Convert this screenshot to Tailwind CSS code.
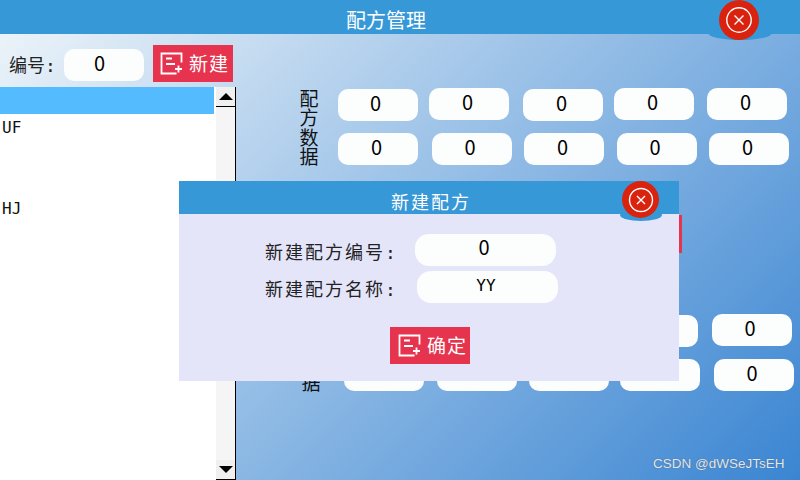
<!DOCTYPE html>
<html lang="zh-CN">
  <head>
    <meta charset="UTF-8" />
    <title>配方管理</title>
    <script src="https://cdn.jsdelivr.net/npm/@tailwindcss/browser@4"></script>
  </head>
  <body class="overflow-hidden">
    <div class="relative w-[800px] h-[480px] overflow-hidden flex flex-col bg-[linear-gradient(135deg,#f0f6fa_0%,#3a85d2_100%)] text-black font-['Noto_Sans_CJK_SC',sans-serif]">
      <!-- title bar -->
      <header class="h-[34px] shrink-0 bg-[#3798d8] text-white text-[20px] leading-[39px] pr-[28px] text-center">配方管理</header>
      <div class="absolute left-[708px] top-[26px] w-[64px] h-[14px] rounded-[50%] bg-[#3798d8]"></div>
      <button class="absolute left-[719px] top-0 w-[40px] h-[40px] rounded-full bg-[#d9230f] flex items-center justify-center">
        <svg width="28" height="28" viewBox="0 0 28 28" fill="none" stroke="#fff" stroke-width="1.4">
          <circle cx="14" cy="14" r="12.2" />
          <path d="M9.500 9.500l9 9M18.500 9.500l-9 9" />
        </svg>
      </button>

      <div class="flex flex-1 min-h-0">
        <!-- recipe list -->
        <aside class="w-[236px] shrink-0 flex flex-col">
          <div class="h-[53px] shrink-0 flex items-start">
            <span class="ml-[9px] mt-[21px] w-[55px] text-[18px] leading-[22px] text-[#222] font-['DejaVu_Sans_Mono','Noto_Sans_CJK_SC',monospace]">编号:</span>
            <div class="mt-[15px] w-[80px] h-[32px] pr-[9px] rounded-[10px] bg-[#fcfdfd] text-[20px] leading-[28px] text-center">0</div>
            <button class="ml-[9px] mt-[11px] w-[80px] h-[37px] bg-[#e6344e] text-white text-[19px] tracking-[1px] flex items-center pl-[7px] gap-[6px]">
              <svg width="23" height="23" viewBox="0 0 23 23" fill="none" stroke="#fff" stroke-width="1.800">
                <path d="M21.500 10.500V1.500H1.500v20h15" />
                <path d="M6 6.500h6M6 12h9M15 17h7M18.500 13.500v7" />
              </svg>
              <span>新建</span>
            </button>
          </div>
          <div class="flex-1 flex bg-white min-h-0">
            <ul class="w-[216px] text-[16px] leading-[27px] pl-[2px] text-[#111] font-['DejaVu_Sans_Mono',monospace]">
              <li class="h-[27px] w-[214px] -ml-[2px] bg-[#55bbff]"></li>
              <li class="h-[27px]">UF</li>
              <li class="h-[27px]"></li>
              <li class="h-[27px]"></li>
              <li class="h-[27px]">HJ</li>
            </ul>
            <div class="w-[20px] bg-[#f5f5f5] border-r border-black flex flex-col justify-between">
              <div class="h-[20px] bg-[#f0f0f0] border-b border-black flex items-center justify-center">
                <div class="w-0 h-0 border-x-[7px] border-x-transparent border-b-[7px] border-b-black"></div>
              </div>
              <div class="h-[20px] bg-[#f0f0f0] border-b border-black flex items-center justify-center">
                <div class="w-0 h-0 border-x-[7px] border-x-transparent border-t-[7px] border-t-black"></div>
              </div>
            </div>
          </div>
        </aside>

        <!-- recipe data -->
        <main class="flex-1 flex flex-col text-[20px] text-center">
          <section class="flex mt-[54px] h-[77px]">
            <div class="ml-[63px] w-[20px] text-[19px] leading-[19.300px] text-[#111]">配方数据</div>
            <div class="ml-[19px] flex flex-col gap-[12px]">
              <div class="flex">
                <div class="mt-[1px] w-[80px] h-[32px] pr-[5px] rounded-[10px] bg-[#fcfdfd] leading-[27px]">0</div>
                <div class="ml-[11px] w-[80px] h-[32px] pr-[3px] rounded-[10px] bg-[#fcfdfd] leading-[27px]">0</div>
                <div class="ml-[14px] mt-[1px] w-[80px] h-[32px] pr-[3px] rounded-[10px] bg-[#fcfdfd] leading-[27px]">0</div>
                <div class="ml-[11px] w-[80px] h-[32px] pr-[3px] rounded-[10px] bg-[#fcfdfd] leading-[27px]">0</div>
                <div class="ml-[13px] w-[80px] h-[32px] pr-[3px] rounded-[10px] bg-[#fcfdfd] leading-[27px]">0</div>
              </div>
              <div class="flex">
                <div class="w-[80px] h-[32px] pr-[3px] rounded-[10px] bg-[#fcfdfd] leading-[27px]">0</div>
                <div class="ml-[14px] w-[80px] h-[32px] pr-[4px] rounded-[10px] bg-[#fcfdfd] leading-[27px]">0</div>
                <div class="ml-[12px] w-[80px] h-[32px] pr-[3px] rounded-[10px] bg-[#fcfdfd] leading-[27px]">0</div>
                <div class="ml-[13px] w-[80px] h-[32px] pr-[4px] rounded-[10px] bg-[#fcfdfd] leading-[27px]">0</div>
                <div class="ml-[12px] w-[80px] h-[32px] pr-[3px] rounded-[10px] bg-[#fcfdfd] leading-[27px]">0</div>
              </div>
            </div>
          </section>

          <div class="mt-[50px] ml-[366px] w-[80px] h-[38px] bg-[#e6344e]"></div>

          <section class="flex mt-[61px] h-[77px]">
            <div class="ml-[65px] w-[20px] text-[19px] leading-[19.300px] text-[#111]">配方数据</div>
            <div class="ml-[23px] flex flex-col gap-[12px]">
              <div class="flex">
                <div class="w-[80px] h-[32px] rounded-[10px] bg-[#fcfdfd] leading-[27px]">0</div>
                <div class="ml-[13px] w-[80px] h-[32px] rounded-[10px] bg-[#fcfdfd] leading-[27px]">0</div>
                <div class="ml-[12px] w-[80px] h-[32px] rounded-[10px] bg-[#fcfdfd] leading-[27px]">0</div>
                <div class="ml-[9px] mt-[1px] w-[80px] h-[32px] rounded-[10px] bg-[#fcfdfd] leading-[27px]">0</div>
                <div class="ml-[14px] w-[80px] h-[32px] pr-[4px] rounded-[10px] bg-[#fcfdfd] leading-[27px]">0</div>
              </div>
              <div class="flex">
                <div class="w-[80px] h-[32px] rounded-[10px] bg-[#fcfdfd] leading-[27px]">0</div>
                <div class="ml-[13px] w-[80px] h-[32px] rounded-[10px] bg-[#fcfdfd] leading-[27px]">0</div>
                <div class="ml-[12px] w-[80px] h-[32px] rounded-[10px] bg-[#fcfdfd] leading-[27px]">0</div>
                <div class="ml-[11px] w-[80px] h-[32px] rounded-[10px] bg-[#fcfdfd] leading-[27px]">0</div>
                <div class="ml-[14px] w-[80px] h-[32px] pr-[4px] rounded-[10px] bg-[#fcfdfd] leading-[27px]">0</div>
              </div>
            </div>
          </section>
        </main>
      </div>

      <div class="absolute left-[653px] top-[456px] text-[13.500px] leading-[16px] text-[#dfe8f2] font-['Liberation_Sans',sans-serif] [text-shadow:0_0_1px_#556]">CSDN @dWSeJTsEH</div>

      <!-- new recipe dialog -->
      <div class="absolute left-[179px] top-[181px] w-[500px] h-[200px] bg-[#e5e5fa] flex flex-col">
        <div class="h-[33px] shrink-0 bg-[#3798d8] pl-[4px] text-white text-[18px] tracking-[2px] leading-[40px] text-center">新建配方</div>
        <div class="absolute left-[441px] top-[28px] w-[42px] h-[12px] rounded-[50%] bg-[#3798d8]"></div>
        <button class="absolute left-[443px] top-0 w-[37px] h-[37px] rounded-full bg-[#d9230f] flex items-center justify-center">
          <svg width="26" height="26" viewBox="0 0 26 26" fill="none" stroke="#fff" stroke-width="1.400">
            <circle cx="13" cy="13" r="11.500" />
            <path d="M9 9l8 8M17 9l-8 8" />
          </svg>
        </button>
        <div class="flex items-start mt-[20px] h-[32px]">
          <span class="ml-[86px] mt-[8px] w-[150px] text-[18px] leading-[22px] tracking-[2px] text-[#222] font-['DejaVu_Sans_Mono','Noto_Sans_CJK_SC',monospace]">新建配方编号:</span>
          <div class="w-[141px] h-[32px] pr-[3px] rounded-[14px] bg-[#fcfdfd] text-[20px] leading-[25px] text-center">0</div>
        </div>
        <div class="flex items-start mt-[5px] h-[32px]">
          <span class="ml-[86px] mt-[8px] w-[152px] text-[18px] leading-[22px] tracking-[2px] text-[#222] font-['DejaVu_Sans_Mono','Noto_Sans_CJK_SC',monospace]">新建配方名称:</span>
          <div class="w-[141px] h-[32px] pr-[3px] rounded-[14px] bg-[#fcfdfd] text-[16px] leading-[29px] text-center font-['DejaVu_Sans_Mono',monospace]">YY</div>
        </div>
        <button class="ml-[211px] mt-[24px] w-[80px] h-[37px] bg-[#e6344e] text-white text-[19px] tracking-[1px] flex items-center pl-[8px] gap-[6px]">
          <svg width="23" height="23" viewBox="0 0 23 23" fill="none" stroke="#fff" stroke-width="1.800">
            <path d="M21.500 10.500V1.500H1.500v20h15" />
            <path d="M6 6.500h6M6 12h9M15 17h7M18.500 13.500v7" />
          </svg>
          <span>确定</span>
        </button>
      </div>
    </div>
  </body>
</html>
